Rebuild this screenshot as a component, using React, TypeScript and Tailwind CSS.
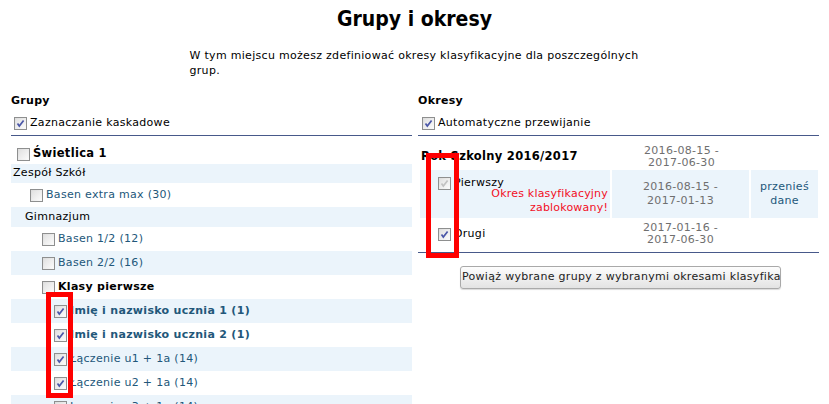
import React from "react";

type CbProps = { checked?: boolean; disabled?: boolean };

function Cb({ checked, disabled }: CbProps) {
  return (
    <span className="relative inline-block w-[13px] h-[13px] shrink-0 border border-[#8e8f8f] bg-gradient-to-br from-[#dcdcdc] to-[#fbfbfb]">
      <span className="absolute inset-[1px] bg-gradient-to-br from-[#e2e2e2] to-[#fafafa]" />
      {checked && (
        <svg viewBox="0 0 11 11" className="absolute inset-0 w-[11px] h-[11px]">
          <path
            d="M2.5 5.5 L4.3 8 L8.6 2.4"
            fill="none"
            stroke={disabled ? "#c2c2c2" : "#4b57a8"}
            strokeWidth="1.7"
          />
        </svg>
      )}
    </span>
  );
}

function Row({
  band,
  h,
  pl,
  children,
}: {
  band?: boolean;
  h: string;
  pl: string;
  children: React.ReactNode;
}) {
  return (
    <div className={`flex items-center ${h} ${pl} ${band ? "bg-[#ebf4fb]" : ""}`}>
      {children}
    </div>
  );
}

export default function App() {
  return (
    <div className="relative w-[829px] h-[404px] overflow-hidden bg-white font-['DejaVu_Sans',sans-serif] text-[11px] tracking-[0.3px] text-black">
      <h1 className="pt-[6px] text-center text-[21px] leading-[26px] tracking-normal font-bold font-['DejaVu_Sans_Condensed','Liberation_Sans',sans-serif]">
        Grupy i okresy
      </h1>
      <p className="mx-auto mt-[16px] w-[456px] pl-[3px] leading-[15px]">
        W tym miejscu możesz zdefiniować okresy klasyfikacyjne dla poszczególnych grup.
      </p>

      <div className="mt-[16px] flex gap-[6px] pl-[11px] pr-[10px]">
        {/* Left */}
        <div className="w-[402px]">
          <div className="font-bold leading-[14px] h-[14px]">Grupy</div>
          <div className="mt-[7px] flex items-center gap-[3px] pl-[3px] h-[16px]">
            <Cb checked />
            <span>Zaznaczanie kaskadowe</span>
          </div>
          <div className="mt-[4px] h-[1px] bg-[#47598a]" />
          <div className="mt-[8px]">
            <Row h="h-[20px]" pl="pl-[6px]">
              <Cb />
              <span className="ml-[3px] font-bold text-[11.5px]">Świetlica 1</span>
            </Row>
            <Row band h="h-[19px]" pl="pl-[2px]">
              <span>Zespół Szkół</span>
            </Row>
            <Row h="h-[24px]" pl="pl-[19px]">
              <Cb />
              <span className="ml-[3px] text-[#22577a]">Basen extra max (30)</span>
            </Row>
            <Row band h="h-[20px]" pl="pl-[14px]">
              <span>Gimnazjum</span>
            </Row>
            <Row h="h-[24px]" pl="pl-[31px]">
              <Cb />
              <span className="ml-[3px] text-[#22577a]">Basen 1/2 (12)</span>
            </Row>
            <Row band h="h-[24px]" pl="pl-[31px]">
              <Cb />
              <span className="ml-[3px] text-[#22577a]">Basen 2/2 (16)</span>
            </Row>
            <Row h="h-[24px]" pl="pl-[31px]">
              <Cb />
              <span className="ml-[3px] font-bold">Klasy pierwsze</span>
            </Row>
            <Row band h="h-[24px]" pl="pl-[43px]">
              <Cb checked />
              <span className="ml-[3px] font-bold text-[#22577a]">Imię i nazwisko ucznia 1 (1)</span>
            </Row>
            <Row h="h-[24px]" pl="pl-[43px]">
              <Cb checked />
              <span className="ml-[3px] font-bold text-[#22577a]">Imię i nazwisko ucznia 2 (1)</span>
            </Row>
            <Row band h="h-[24px]" pl="pl-[43px]">
              <Cb checked />
              <span className="ml-[3px] text-[#22577a]">Łączenie u1 + 1a (14)</span>
            </Row>
            <Row h="h-[24px]" pl="pl-[43px]">
              <Cb checked />
              <span className="ml-[3px] text-[#22577a]">Łączenie u2 + 1a (14)</span>
            </Row>
            <Row band h="h-[24px]" pl="pl-[43px]">
              <Cb />
              <span className="ml-[3px] text-[#22577a]">Łączenie u3 + 1a (14)</span>
            </Row>
          </div>
        </div>

        {/* Right */}
        <div className="w-[402px]">
          <div className="font-bold leading-[14px] h-[14px]">Okresy</div>
          <div className="mt-[7px] flex items-center gap-[3px] pl-[4px] h-[16px]">
            <Cb checked />
            <span>Automatyczne przewijanie</span>
          </div>
          <div className="mt-[4px] h-[1px] bg-[#47598a]" />
          <div className="mt-[7px] flex h-[27px]">
            <div className="w-[192px] pl-[3px] flex items-center font-bold text-[11.5px]">
              Rok Szkolny 2016/2017
            </div>
            <div className="w-[139px] ml-[2px] flex flex-col items-center justify-center text-[#6f6f6f] leading-[12px]">
              <span>2016-08-15 -</span>
              <span>2017-06-30</span>
            </div>
          </div>
          <div className="flex gap-[2px] h-[48px] pl-[2px]">
            <div className="w-[190px] bg-[#ebf4fb] relative">
              <div className="absolute left-[18px] top-[5px] flex items-center gap-[3px]">
                <Cb checked disabled />
                <span>Pierwszy</span>
              </div>
              <div className="absolute right-[2px] top-[17px] text-right text-[#f20f1f] leading-[14px] tracking-[0.2px]">
                Okres klasyfikacyjny
                <br />
                zablokowany!
              </div>
            </div>
            <div className="w-[137px] bg-[#ebf4fb] flex flex-col items-center justify-center text-[#6f6f6f] leading-[14px]">
              <span>2016-08-15 -</span>
              <span>2017-01-13</span>
            </div>
            <div className="w-[67px] bg-[#ebf4fb] flex flex-col items-center justify-center text-[#22577a] leading-[14px]">
              <span>przenieś</span>
              <span>dane</span>
            </div>
          </div>
          <div className="mt-[2px] flex h-[28px] pl-[2px]">
            <div className="w-[190px] relative">
              <div className="absolute left-[18px] top-[6px] flex items-center gap-[3px]">
                <Cb checked />
                <span>Drugi</span>
              </div>
            </div>
            <div className="w-[137px] ml-[2px] flex flex-col items-center justify-center text-[#6f6f6f] leading-[12px]">
              <span>2017-01-16 -</span>
              <span>2017-06-30</span>
            </div>
          </div>
          <div className="mt-[4px] h-[1px] bg-[#47598a]" />
          <div className="mt-[13px] pl-[42px]">
            <button className="w-[321px] h-[23px] overflow-hidden whitespace-nowrap text-left pl-[1px] rounded-[3px] border border-[#a9a9a9] bg-gradient-to-b from-[#fdfdfd] to-[#e3e3e3] text-[11px] tracking-[0.3px] text-[#222] font-['DejaVu_Sans',sans-serif] shadow-[0_1px_1px_rgba(0,0,0,0.15)]">
              Powiąż wybrane grupy z wybranymi okresami klasyfikacyjnymi
            </button>
          </div>
        </div>
      </div>

      {/* Red highlight overlays */}
      <div className="absolute left-[46px] top-[292px] w-[27px] h-[106px] border-[5px] border-[#ff0000]" />
      <div className="absolute left-[426px] top-[153px] w-[33px] h-[105px] border-[5px] border-[#ff0000]" />
    </div>
  );
}
